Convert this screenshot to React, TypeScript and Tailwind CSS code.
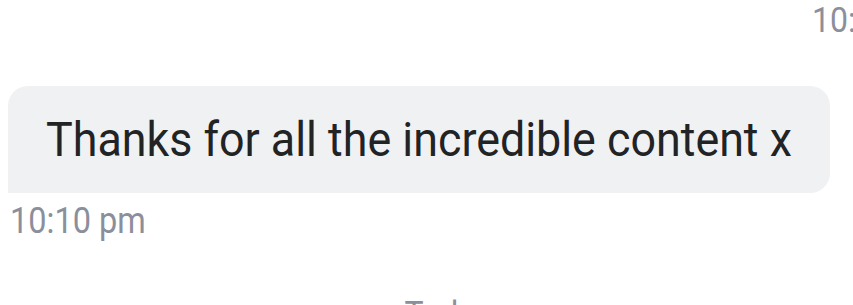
export default function App() {
  return (
    <div
      className="relative h-[305px] w-[853px] overflow-hidden bg-white"
      style={{ fontFamily: 'Roboto, "Liberation Sans", sans-serif' }}
    >
      <div className="flex h-[40px] items-start pl-[812px]">
        <span className="origin-top-left scale-y-[1.12] whitespace-nowrap text-[32px] leading-[36px] text-[#8b8f9b]">
          10:10 pm
        </span>
      </div>
      <div className="mt-[46px] ml-[8px] flex h-[107px] w-[822px] items-center rounded-t-[20px] rounded-br-[20px] bg-[#f0f1f3] pl-[38px]">
        <span className="scale-y-[1.06] whitespace-nowrap text-[44.8px] text-[#222325]">
          Thanks for all the incredible content x
        </span>
      </div>
      <div className="ml-[10px] mt-[8px] flex">
        <span className="origin-top-left scale-y-[1.12] whitespace-nowrap text-[32.5px] leading-[36px] text-[#8b8f9b]">
          10:10 pm
        </span>
      </div>
      <div className="mt-[57px] flex justify-center pl-[42px]">
        <span className="origin-top scale-y-[1.12] text-[32px] leading-[36px] text-[#8b8f9b]">Today</span>
      </div>
    </div>
  )
}
